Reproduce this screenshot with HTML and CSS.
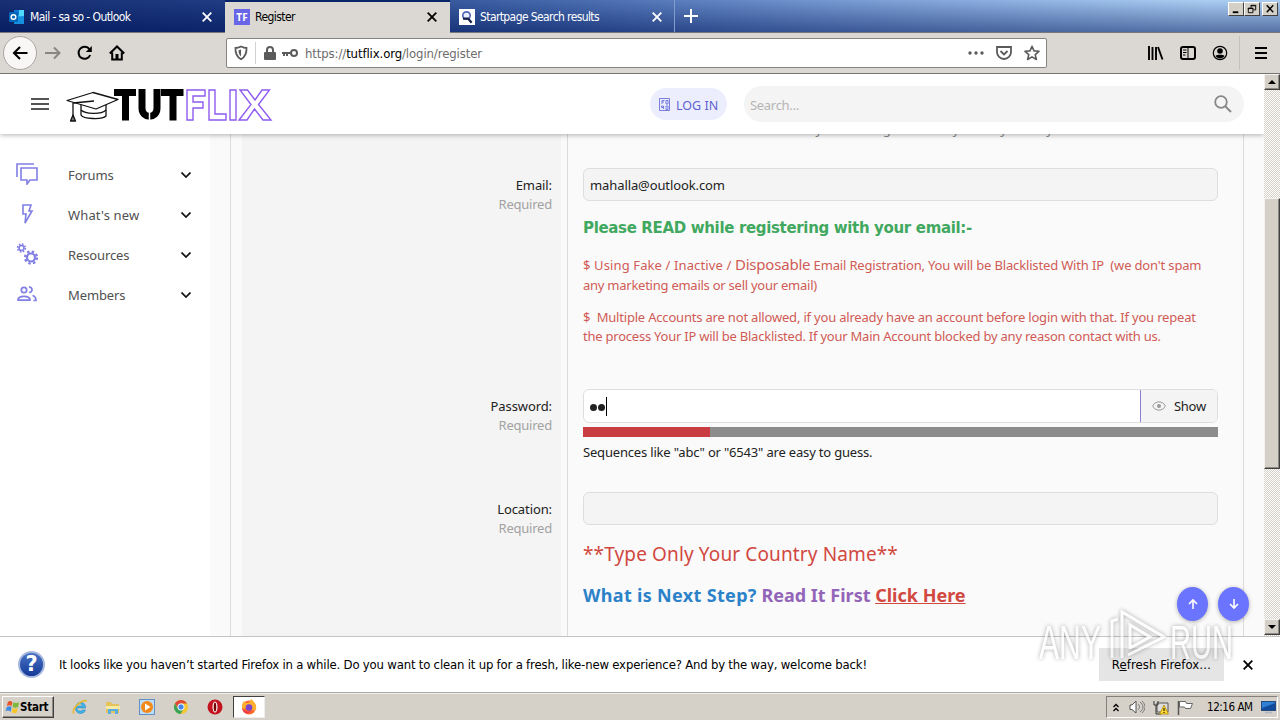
FILE: index.html
```html
<!DOCTYPE html>
<html lang="en">
<head>
<meta charset="utf-8">
<title>Register</title>
<link rel="stylesheet" href="styles.css">
</head>
<body>
<div class="screen">
  <div class="tabbar">
    <div class="tab tab-first">
      <svg class="fav" viewBox="0 0 16 16"><path d="M5 1h10v12H5z" fill="#28a8ea"/><path d="M10 1h5v6h-5z" fill="#50d9ff"/><path d="M5 1h5v5H5z" fill="#0f78d4"/><path d="M5 9l10-2v8H5z" fill="#1490df"/><rect y="3" width="9" height="10" rx="1" fill="#0364b8"/><circle cx="4.5" cy="8" r="2.3" fill="none" stroke="#fff" stroke-width="1.5"/></svg>
      <span class="tab-title t-mail">Mail - sa so - Outlook</span>
      <svg class="x" viewBox="0 0 10 10"><path d="M.7.7l8.6 8.6M9.3.7L.7 9.3"/></svg>
    </div>
    <div class="tab tab-active">
      <span class="fav fav-tf">TF</span>
      <span class="tab-title t-reg">Register</span>
      <svg class="x" viewBox="0 0 10 10"><path d="M.7.7l8.6 8.6M9.3.7L.7 9.3"/></svg>
    </div>
    <div class="tab tab-last">
      <svg class="fav" viewBox="0 0 16 16"><rect width="16" height="16" fill="#fff"/><circle cx="7.5" cy="6.5" r="3.7" fill="#e8edff" stroke="#5365b8" stroke-width="1.7"/><path d="M4 9.6h5.2l3.4 4.2" fill="none" stroke="#17204c" stroke-width="2.3"/></svg>
      <span class="tab-title t-start">Startpage Search results</span>
      <svg class="x" viewBox="0 0 10 10"><path d="M.7.7l8.6 8.6M9.3.7L.7 9.3"/></svg>
    </div>
    <svg class="plus" viewBox="0 0 14 14"><path d="M7 0v14M0 7h14"/></svg>
    <div class="winbtns">
      <svg viewBox="0 0 15 13"><path d="M4 10h6" stroke="#000" stroke-width="2"/></svg>
      <svg viewBox="0 0 15 13"><path d="M6.5 5V2.5h5v5H9M6 3h6M3.500 5.500h5v5h-5zM3 6h6" fill="none" stroke="#000"/></svg>
      <svg class="wclose" viewBox="0 0 15 13"><path d="M4 2.500l7 7.500M11 2.500l-7 7.500" stroke="#000" stroke-width="1.6"/></svg>
    </div>
  </div>

  <div class="navbar">
    <div class="back"><svg viewBox="0 0 16 16"><path d="M15 8H1.500M7.500 2L1.500 8l6 6"/></svg></div>
    <svg class="ni n-fwd" viewBox="0 0 16 16"><path d="M0 8h14M9 2.500L14.500 8 9 13.500"/></svg>
    <svg class="ni n-reload" viewBox="0 0 16 16"><path d="M13.200 10A6 6 0 1 1 12.500 4.300"/><path d="M14.800 1v6h-6z" fill="#000" stroke="none"/></svg>
    <svg class="ni n-home" viewBox="0 0 16 16"><path d="M.8 8.500L8 1.500l7.200 7M3.200 7.500v7h9.600v-7"/><path d="M6.500 9h3v5.500h-3z" fill="#000" stroke="none"/></svg>
    <div class="urlbar">
      <svg class="u-shield" viewBox="0 0 14 16"><path d="M7 1.500C9 2.500 11 3 12.500 3c.3 5-1.500 9-5.500 11.300C3 12 1.200 8 1.500 3 3 3 5 2.500 7 1.500z" fill="none" stroke="#5b5b5b" stroke-width="1.800"/><path d="M7 4.500v7C5.200 10 4.500 8 4.500 5.300z" fill="#5b5b5b"/></svg>
      <span class="u-sep"></span>
      <svg class="u-lock" viewBox="0 0 12 14"><path d="M3 7V4a3 3 0 0 1 6 0v3" fill="none" stroke="#5b5b5b" stroke-width="2"/><rect y="6" width="12" height="8" rx="1" fill="#5b5b5b"/></svg>
      <svg class="u-key" viewBox="0 0 16 10"><circle cx="12" cy="5" r="3" fill="none" stroke="#5b5b5b" stroke-width="2"/><path d="M0 4h9v2H6v2H4V6H3v2H1V6H0z" fill="#5b5b5b"/></svg>
      <span class="url">https://<b>tutflix.org</b>/login/register</span>
      <svg class="u-dots" viewBox="0 0 16 4"><circle cx="2" cy="2" r="1.700"/><circle cx="8" cy="2" r="1.700"/><circle cx="14" cy="2" r="1.700"/></svg>
      <svg class="u-pocket" viewBox="0 0 16 14"><path d="M1 1h14v5a7 7 0 0 1-14 0z" fill="none" stroke="#5b5b5b" stroke-width="1.800"/><path d="M4.500 5L8 8.500 11.500 5" fill="none" stroke="#5b5b5b" stroke-width="1.800"/></svg>
      <svg class="u-star" viewBox="0 0 16 16"><path d="M8 1.300l2 4.600 5 .4-3.800 3.300 1.200 4.900L8 11.900l-4.400 2.600 1.200-4.900L1 6.300l5-.4z" fill="none" stroke="#5b5b5b" stroke-width="1.600" stroke-linejoin="round"/></svg>
    </div>
    <svg class="r-lib" viewBox="0 0 16 14"><path d="M1 0v14M4.500 1v13M8 1v13M10 1l4.500 12.500" stroke="#000" stroke-width="1.900"/></svg>
    <svg class="r-side" viewBox="0 0 16 14"><rect x="1" y="1" width="14" height="12" rx="2" fill="none" stroke="#000" stroke-width="2"/><path d="M8 1v12M3 4h3.500M3 6.500h3.500M3 9h2.500" stroke="#000"/></svg>
    <svg class="r-acc" viewBox="0 0 16 16"><circle cx="8" cy="8" r="6.700" fill="none" stroke="#000" stroke-width="1.200"/><circle cx="8" cy="6" r="2.800"/><path d="M3.500 11c.5-1.700 8.500-1.700 9 0-2 3.200-7 3.200-9 0z"/></svg>
    <span class="r-sep"></span>
    <svg class="r-menu" viewBox="0 0 12 12"><path d="M0 1h12M0 6h12M0 11h12" stroke="#000" stroke-width="2"/></svg>
  </div>

  <div class="viewport">
    <div class="page">
      <header class="site-head">
        <svg class="burger" viewBox="0 0 18 12"><path d="M0 1h18M0 6h18M0 11h18" stroke="#555" stroke-width="1.800"/></svg>
        <svg class="logo" viewBox="0 0 210 40">
          <g fill="#fff" stroke="#111" stroke-width="1.300" stroke-linejoin="round"><path d="M16 19v11c2 4 21 5 25 1V19"/><path d="M16 25c4 4 20 5 25 0" fill="none"/><path d="M2 15.500L28 7.500 53 14.500 31 24z"/><path d="M29 16L8 18v13" fill="none"/><path d="M8 30l-2.500 6h5z" fill="#777"/></g>
          <g stroke="#000" stroke-width="7" fill="none"><path d="M49 7.500h22M60.500 4.500v31M96 7.500h22.500M108 4.500v31"/><path d="M77 4v19c0 11 15 11 15 0V4"/></g><path d="M84.500 26v10" stroke="#fff" stroke-width="1.500"/>
          <path d="M122 5h18v6h-12v6h10v6h-10v12h-6zM144 5h6v24h11v6h-17zM165 5h6v30h-6zM175 5h7.500l7.500 10 7-10h7.500l-11 14.500L206 35h-8l-8.500-11-7.500 11h-8l12-15.500z" fill="#fff" stroke="#8f5bf0" stroke-width="1.400"/>
        </svg>
        <a class="login"><svg viewBox="0 0 11 13"><path d="M.5.500h10v12H.5zM3 6V2.500h2.500M3 4h2M7 2.500h2V6H7zM2.500 8h2v3M2.500 8v1.500h2M7 8h2v3.500H7z" fill="none" stroke="#6c70dc" stroke-width=".9"/></svg><span>LOG IN</span></a>
        <div class="search"><span>Search...</span><svg viewBox="0 0 18 18"><circle cx="7" cy="7" r="5.800" fill="none" stroke="#888" stroke-width="1.800"/><path d="M11 11l6 6" stroke="#888" stroke-width="2"/></svg></div>
      </header>
      <div class="body">
        <nav class="side">
          <a><svg class="si" viewBox="0 0 22 22"><path d="M1 14V1h17M5 5h16v12h-7l-3 4v-4H5z"/></svg><span class="s1">Forums</span><svg class="chev" viewBox="0 0 10 6"><path d="M.5.500L5 5 9.500.500"/></svg></a>
          <a><svg class="si" viewBox="0 0 22 22"><path d="M7 2h8l-2 6h3L9 20l1-9H7z"/></svg><span class="s2">What's new</span><svg class="chev" viewBox="0 0 10 6"><path d="M.5.500L5 5 9.500.500"/></svg></a>
          <a><svg class="si" viewBox="0 0 22 22"><circle cx="5.500" cy="5" r="2.500"/><circle cx="5.500" cy="5" r="3.900" stroke-dasharray="1.600 1.460"/><circle cx="15" cy="14.500" r="4" stroke-width="2.200"/><circle cx="15" cy="14.500" r="6" stroke-width="2.200" stroke-dasharray="2.500 2.210"/></svg><span class="s3">Resources</span><svg class="chev" viewBox="0 0 10 6"><path d="M.5.500L5 5 9.500.500"/></svg></a>
          <a><svg class="si" viewBox="0 0 22 22"><circle cx="8" cy="7" r="2.700" stroke-width="1.700"/><path d="M2 17.200c0-5 12-5 12 0zM13 4.200c4-.5 4 5.500 0 5.300M16.500 12.500c2.500.8 3.500 2.500 3.500 5h-2.500" stroke-width="1.700"/></svg><span class="s4">Members</span><svg class="chev" viewBox="0 0 10 6"><path d="M.5.500L5 5 9.500.500"/></svg></a>
        </nav>
        <main class="form">
          <dl class="row r-name"><dt></dt><dd><p class="hint">This is the name that will be shown with your messages. You may use any name you wish.</p></dd></dl>
          <dl class="row r-email">
            <dt><span class="l1">Email:</span><small>Required</small></dt>
            <dd>
              <div class="input"><span class="mail">mahalla@outlook.com</span></div>
              <p class="read">Please READ while registering with your email:-</p>
              <p class="warn w1"><span class="a0">$ Using Fake / Inactive / </span><big>Disposable</big><span class="a1"> Email Registration, You will be Blacklisted With IP&nbsp; (we don't spam</span><br><span class="a2">any marketing emails or sell your email)</span></p>
              <p class="warn w2"><span class="a3">$&nbsp; Multiple Accounts are not allowed, if you already have an account before login with that. If you repeat</span><br><span class="a4">the process Your IP will be Blacklisted. If your Main Account blocked by any reason contact with us.</span></p>
            </dd>
          </dl>
          <dl class="row r-pass">
            <dt><span class="l2">Password:</span><small>Required</small></dt>
            <dd>
              <div class="input pass"><div class="dots"><i></i><i></i><b></b></div><div class="show"><svg viewBox="0 0 14 10"><path d="M.7 5C3-.500 11-.500 13.300 5 11 10.500 3 10.500.7 5z" fill="none" stroke="#999"/><circle cx="7" cy="5" r="2" fill="#999"/></svg><span>Show</span></div></div>
              <div class="meter"><i></i></div>
              <p class="seq">Sequences like "abc" or "6543" are easy to guess.</p>
            </dd>
          </dl>
          <dl class="row r-loc">
            <dt><span class="l3">Location:</span><small>Required</small></dt>
            <dd>
              <div class="input"></div>
              <p class="country">**Type Only Your Country Name**</p>
              <p class="next"><span>What is Next Step?</span> <em>Read It First</em> <a>Click Here</a></p>
            </dd>
          </dl>
        </main>
      </div>
      <div class="jump">
        <span><svg viewBox="0 0 12 12"><path d="M6 11V2M2 6l4-4 4 4"/></svg></span>
        <span><svg viewBox="0 0 12 12"><path d="M6 1v9M2 6l4 4 4-4"/></svg></span>
      </div>
    </div>
    <div class="scroll">
      <div class="sbtn"><svg viewBox="0 0 8 4"><path d="M0 4l4-4 4 4z"/></svg></div>
      <div class="thumb"></div>
      <div class="sbtn sdown"><svg viewBox="0 0 8 4"><path d="M0 0l4 4 4-4z"/></svg></div>
    </div>
  </div>

  <div class="notice">
    <span class="q">?</span>
    <span class="msg">It looks like you haven’t started Firefox in a while. Do you want to clean it up for a fresh, like-new experience? And by the way, welcome back!</span>
    <button class="refresh"><span>R<u>e</u>fresh Firefox…</span></button>
    <svg class="nx" viewBox="0 0 10 10"><path d="M.7.7l8.600 8.600M9.300.7L.7 9.300"/></svg>
  </div>

  <div class="taskbar">
    <div class="start"><svg viewBox="0 0 16 16"><path d="M3 3c2-2 3-1.500 5 0L7 7C5 6 4 6 2 7z" fill="#e8542a"/><path d="M9 3c2 1 4 1 6 0l-1 5c-2 1-4 1-6 0z" fill="#7cb83a"/><path d="M2 8c2-1 3-1 5 0l-1 5c-2-1.500-3.500-1.500-5.500-.5z" fill="#3c8be0"/><path d="M8 9c2 1 3.500 1 5.500 0l-1 5c-2 1-4 .5-5.500-.5z" fill="#f6c62c"/></svg><span>Start</span></div>
    <svg class="ti t1" viewBox="0 0 16 16"><path d="M4.200 9h9.300c.5-7-9-8-10-.5-.5 7 8 8 10 2.500h-3c-2 2-5.500 1-5.800-2zM5 7c.8-3 5-3 5.500 0z" fill="#42b4e8" stroke="#2789c4" stroke-width=".6"/><path d="M2 14.500C-1 11 9 0 15 2" fill="none" stroke="#e9bb35" stroke-width="1.700"/></svg>
    <svg class="ti t2" viewBox="0 0 16 16"><path d="M1 3h5l1 2h7v9H1z" fill="#e3c35c"/><path d="M1 7h14v3H1z" fill="#f8eaa5"/><path d="M3 15v-5h10v5h-3v-3H6v3z" fill="#58aee0"/></svg>
    <svg class="ti t3" viewBox="0 0 16 16"><rect x=".5" y=".5" width="15" height="15" fill="#bfdcf4" stroke="#5d91c8"/><circle cx="8" cy="8" r="6" fill="#f18a1b"/><path d="M6 4.500v7L11.500 8z" fill="#fff"/></svg>
    <svg class="ti t4" viewBox="0 0 16 16"><circle cx="8" cy="8" r="7" fill="#f5c72c"/><path d="M1.900 4.500A7 7 0 0 1 14 4.500H8L5 9.500z" fill="#df4835"/><path d="M1.900 4.500A7 7 0 0 0 7.500 15l3-5L5 9.700z" fill="#39a457"/><circle cx="8" cy="8" r="3.200" fill="#4687ec" stroke="#fff"/></svg>
    <svg class="ti t5" viewBox="0 0 16 16"><circle cx="8" cy="8" r="7.500" fill="#c41420"/><ellipse cx="8" cy="8" rx="2.500" ry="5.500" fill="#fff"/><ellipse cx="8" cy="8" rx="1.300" ry="4.500" fill="#700"/></svg>
    <div class="active-app"><svg class="ti" viewBox="0 0 16 16"><circle cx="8" cy="8.500" r="7" fill="#ff6b2c"/><path d="M1 8c0-3 1-5 2-6 1 2 3 2 4 2 3-1 2-3 3-4 4 3 6 7 5 10-3 4-5-2-7-2S1 12 1 8z" fill="#ffb02e"/><circle cx="8" cy="8.500" r="3.300" fill="#7a45cc"/><path d="M1 9c2 3 5 4 9 3-2 4-8 3-9-3z" fill="#f5354c"/></svg></div>
    <div class="tray">
      <svg class="y1" viewBox="0 0 6 9"><path d="M.5 4L3 1.500 5.500 4M.5 8L3 5.500 5.500 8" fill="none" stroke="#000" stroke-width="1.300"/></svg>
      <svg class="y2" viewBox="0 0 16 14"><path d="M1 5h2l4-4v12L3 9.500H1z" fill="#fff" stroke="#555"/><path d="M9 4c2 2 2 4 0 6M11 2c4 3 4 7 0 10M13 1c4 4 4 8 0 12" fill="none" stroke="#777"/></svg>
      <svg class="y3" viewBox="0 0 16 15"><path d="M4 3h11v9H4z" fill="#ddd" stroke="#555"/><path d="M1 1v4h4V1M3 5v9h5" fill="none" stroke="#333"/><path d="M11 5l4.500 9h-9z" fill="#ffd733" stroke="#a58100" stroke-width=".7"/><path d="M11 8v3M11 12v1" stroke="#000"/></svg>
      <svg class="y4" viewBox="0 0 16 15"><path d="M1.500 1v14" stroke="#555" stroke-width="1.500"/><path d="M2.500 1.500h6l1 2h6l-2 5h-5l-1-1.500h-5z" fill="#fff" stroke="#666"/></svg>
      <span class="clock">12:16 AM</span>
      <svg class="y5" viewBox="0 0 15 14"><rect x=".5" y="1.500" width="14" height="9" fill="#2f7fd4" stroke="#244a80"/><path d="M1 8l13-5v7H1z" fill="#124b9c"/><path d="M4 12.500h7" stroke="#aeb9c6" stroke-width="1.500"/></svg>
    </div>
  </div>

  <svg class="mark" viewBox="0 0 200 60">
    <g class="mark-text"><text x="5" y="52" textLength="62" lengthAdjust="spacingAndGlyphs">ANY</text><text x="136" y="52" textLength="63" lengthAdjust="spacingAndGlyphs">RUN</text></g>
    <path d="M78 51V14l6-2M88 51V5l42 25-36 18M96 42V18l20 12-20 11" fill="none" stroke="#fff" stroke-width="3"/>
  </svg>
</div>
</body>
</html>
```
FILE: styles.css
```css
* { box-sizing: border-box; }
body { margin: 0; background: #fff; }
p, dl, dd { margin: 0; }
svg { display: block; flex: none; }
.screen { position: relative; width: 1280px; height: 720px; overflow: hidden; display: flex; flex-direction: column; font-family: "DejaVu Sans Condensed", "DejaVu Sans", sans-serif; font-stretch: condensed; font-size: 12px; color: #000; }
.screen span { white-space: nowrap; }

/* tab strip */
.tabbar { height: 33px; flex: none; display: flex; border-bottom: 1px solid #77777d; background: linear-gradient(180deg, rgba(255,255,255,.06), rgba(5,25,90,.5)), linear-gradient(90deg, #0a246a 0, #12307c 230px, #3b60a8 560px, #6f94d0 840px, #a6cbf2 1210px, #a6caf0 100%); }
.tab { display: flex; align-items: center; height: 32px; width: 225px; padding: 2px 13px 0 9px; color: #fff; }
.tab-active { background: #dbd8d3; color: #000; height: 33px; border-top: 2px solid #0a246a; padding-top: 0; padding-bottom: 2px; }
.tab-last { border-right: 1px solid #839bce; padding-right: 12px; }
.fav { width: 16px; height: 16px; margin-right: 5px; }
.fav-tf { background: #6866e6; color: #fff; font: bold 10px/16px "Noto Sans", sans-serif; text-align: center; }
.tab-title { flex: 1; }
.t-mail { letter-spacing: -.59px; }
.t-reg { letter-spacing: -.55px; }
.t-start { letter-spacing: -.6px; }
.x, .nx { width: 10px; height: 10px; fill: none; stroke: currentColor; stroke-width: 1.8; }
.plus { width: 14px; height: 14px; margin: 9px 0 0 9px; stroke: #fff; stroke-width: 2; }
.winbtns { display: flex; margin: 2px 2px 0 auto; }
.winbtns svg { width: 16px; height: 14px; background: #d4d0c8; border: 1px solid; border-color: #fff #404040 #404040 #fff; }
.winbtns .wclose { margin-left: 2px; }

/* toolbar */
.navbar { height: 41px; flex: none; display: flex; align-items: center; background: #dbd8d3; border-bottom: 1px solid #77756f; }
.back { width: 34px; height: 34px; margin-left: 3px; border: 1px solid #aaa7a2; border-radius: 50%; background: #f8f7f6; display: flex; align-items: center; justify-content: center; }
.back svg { width: 17px; height: 16px; fill: none; stroke: #000; stroke-width: 2.1; }
.ni { width: 16px; height: 16px; fill: none; stroke: #000; stroke-width: 2; }
.n-fwd { margin-left: 8px; stroke: #888681; }
.n-reload { margin-left: 16px; }
.n-home { margin-left: 16px; }
.urlbar { width: 821px; height: 30px; margin-left: 101px; border: 1px solid #86847f; border-radius: 2px; background: #fff; display: flex; align-items: center; }
.u-shield { width: 14px; height: 16px; margin-left: 7px; }
.u-sep { width: 1px; height: 22px; margin-left: 7px; background: #d2d2d2; }
.u-lock { width: 12px; height: 14px; margin-left: 8px; }
.u-key { width: 16px; height: 10px; margin-left: 6px; }
.url { margin-left: 7px; flex: 1; font-size: 13px; letter-spacing: -.1px; color: #6c6c6c; }
.url b { font-weight: normal; color: #000; }
.u-dots { width: 16px; height: 4px; fill: #5b5b5b; }
.u-pocket { width: 16px; height: 14px; margin-left: 12px; }
.u-star { width: 16px; height: 16px; margin: 0 6px 0 12px; }
.r-lib { width: 16px; height: 14px; margin-left: 101px; }
.r-side { width: 16px; height: 14px; margin-left: 16px; }
.r-acc { width: 16px; height: 16px; margin-left: 16px; }
.r-sep { width: 1px; height: 34px; margin-left: 11px; background: #c5c2bc; }
.r-menu { width: 12px; height: 12px; margin-left: 15px; }

/* web page */
.viewport { height: 562px; flex: none; display: flex; font-family: "Noto Sans", "Open Sans", sans-serif; font-stretch: normal; font-size: 13px; }
.page { position: relative; width: 1264px; display: flex; flex-direction: column; overflow: hidden; background: #fafafa; }
.site-head { position: relative; z-index: 2; height: 60px; flex: none; display: flex; align-items: center; background: #fff; box-shadow: 0 1px 5px rgba(0,0,0,.3); }
.burger { width: 18px; height: 12px; margin-left: 31px; }
.logo { width: 210px; height: 40px; margin: 2px 0 0 16px; }
.login { display: flex; align-items: center; width: 77px; height: 32px; margin: 0 0 0 375px; padding-left: 9px; gap: 6px; border-radius: 16px; background: #eceefe; color: #6163ce; font-size: 12.500px; }
.login svg { width: 11px; height: 13px; }
.login span { letter-spacing: 0; padding-top: 2px; }
.search { display: flex; align-items: center; justify-content: space-between; width: 500px; height: 36px; margin-left: 17px; padding: 0 12px 0 6px; border-radius: 18px; background: #f4f4f4; color: #b5b5b5; }
.search span { letter-spacing: -.3px; padding-top: 2px; }
.search svg { width: 18px; height: 18px; }
.body { height: 502px; flex: none; display: flex; }
.side { width: 210px; flex: none; padding-top: 21px; background: #fff; }
.side a { display: flex; align-items: center; height: 40px; padding: 0 19px 0 16px; color: #505050; }
.side span { flex: 1; margin: -1px 0 0 30px; }
.s1, .s3, .s4 { letter-spacing: -.12px; }
.s2 { letter-spacing: .15px; }
.si { width: 22px; height: 22px; margin-top: -2px; fill: none; stroke: #817fe3; stroke-width: 1.600; }
.chev { width: 10px; height: 6px; margin-top: -1px; fill: none; stroke: #111; stroke-width: 1.700; }
.form { width: 1014px; margin-left: 20px; border: solid #dcdcdc; border-width: 0 1px; overflow: hidden; }
.row { display: flex; }
dt { width: 337px; flex: none; padding: 8px 15px 0 0; text-align: right; color: #222; background: linear-gradient(90deg, #fafafa 11px, #f4f4f4 11px, #f4f4f4 330px, #fafafa 330px); border-right: 1px solid #dcdcdc; }
dt span, dt small { display: block; }
dt span { line-height: 19px; letter-spacing: -.1px; }
dt small { font-size: 13px; line-height: 19px; color: #a2a2a2; letter-spacing: -.22px; }
dd { width: 635px; margin-left: 15px; }
.r-name { height: 34px; }
.r-name dd { display: flex; }
.hint { margin-top: -15px; height: 20px; line-height: 20px; color: #888; white-space: nowrap; letter-spacing: -.34px; }
.r-email { height: 221px; }
.r-pass { height: 103px; }
.r-loc { height: 146px; }
.input { height: 33px; border: 1px solid #dedede; border-radius: 6px; background: #f4f4f4; padding: 0 6px; display: flex; align-items: center; color: #222; }
.mail { letter-spacing: -.1px; }
.read { margin-top: 16px; height: 22px; font: bold 15px/22px "DejaVu Sans", sans-serif; color: #41a85f; white-space: nowrap; letter-spacing: -.34px; }
.warn { color: #d05a55; white-space: nowrap; }
.warn big { font-size: 15px; letter-spacing: -.2px; }
.a0 { letter-spacing: .12px; white-space: pre !important; }
.a1 { letter-spacing: -.16px; }
.a2 { letter-spacing: -.25px; }
.a3 { letter-spacing: -.19px; }
.a4 { letter-spacing: -.23px; }
.w1 { margin-top: 15px; line-height: 20px; }
.w2 { margin-top: 13px; line-height: 19px; }
.pass { height: 34px; padding: 0 0 0 6px; background: #fff; }
.dots { flex: 1; display: flex; align-items: center; gap: 1px; }
.dots i { width: 7px; height: 7px; border-radius: 50%; background: #222; margin-top: 2px; }
.dots b { width: 1px; height: 19px; background: #000; }
.show { width: 77px; height: 32px; display: flex; align-items: center; gap: 8px; padding-left: 11px; border-left: 1px solid #8a80d8; border-radius: 0 5px 5px 0; background: #f4f4f4; }
.show svg { width: 14px; height: 10px; }
.meter { height: 10px; margin-top: 4px; background: #8c8c8c; }
.meter i { display: block; width: 127px; height: 10px; background: #c93c42; }
.show span { letter-spacing: -.3px; }
.seq { margin-top: 5px; line-height: 20px; white-space: nowrap; color: #222; letter-spacing: -.18px; }
.country { margin-top: 16px; font-size: 19px; line-height: 26px; color: #d14841; white-space: nowrap; letter-spacing: .13px; }
.next { margin-top: 15px; font-size: 18px; font-weight: bold; line-height: 26px; white-space: nowrap; color: #2c82c9; }
.next span { letter-spacing: .33px; }
.next em { font-style: normal; color: #9365b8; }
.next a { color: #d14841; text-decoration: underline; }
.jump { position: absolute; right: 15px; bottom: 15px; display: flex; gap: 10px; }
.jump span { width: 31px; height: 34px; border-radius: 50%; background: #6b74ff; box-shadow: 0 1px 4px rgba(0,0,0,.3); display: flex; align-items: center; justify-content: center; }
.jump svg { width: 12px; height: 12px; fill: none; stroke: #fff; stroke-width: 1.600; }

/* scrollbar */
.scroll { width: 16px; display: flex; flex-direction: column; background: repeating-conic-gradient(#d4d0c8 0 25%, #fff 0 50%) 0 0 / 2px 2px; }
.sbtn, .thumb { background: #d4d0c8; border: 1px solid; border-color: #f4f2ee #404040 #404040 #f4f2ee; box-shadow: inset -1px -1px #8d8a84; }
.sbtn { height: 16px; display: flex; align-items: center; justify-content: center; }
.sbtn svg { width: 8px; height: 4px; }
.thumb { height: 271px; margin-top: 108px; }
.sdown { margin-top: auto; margin-bottom: 1px; }

/* notification */
.notice { height: 57px; flex: none; display: flex; align-items: center; background: #fff; border-top: 1px solid #c4c4c4; border-bottom: 1px solid #aaa; padding-left: 18px; }
.q { width: 27px; height: 27px; border-radius: 50%; border: 2px solid #a8b8dd; background: linear-gradient(#4772c5, #153a97); color: #fff; font: bold 21px/23px "DejaVu Sans", sans-serif; text-align: center; }
.msg { width: 1040px; margin-left: 14px; font-size: 13px; letter-spacing: -.14px; word-spacing: -.2px; }
.refresh { width: 125px; height: 33px; padding: 0; border: 0; background: #e5e5e5; font: inherit; font-size: 13px; letter-spacing: .08px; color: #000; }
.nx { margin-left: 19px; }

/* taskbar */
.taskbar { height: 27px; flex: none; display: flex; align-items: center; background: #d5d0c8; border-top: 1px solid #f0eeea; }
.start { width: 52px; height: 22px; margin-left: 2px; padding-left: 2px; display: flex; align-items: center; border: 1px solid; border-color: #fff #404040 #404040 #fff; box-shadow: inset -1px -1px #8d8a84; font-weight: bold; font-size: 11.500px; letter-spacing: -.25px; }
.start svg { width: 15px; height: 16px; }
.ti { width: 16px; height: 16px; }
.t1 { margin-left: 18px; }
.t2 { margin-left: 17px; }
.t3 { margin-left: 18px; }
.t4 { margin-left: 18px; }
.t5 { margin-left: 18px; }
.active-app { width: 32px; height: 22px; margin-left: 10px; display: flex; align-items: center; justify-content: center; background: #fff; border: 1px solid; border-color: #404040 #eee #eee #404040; }
.tray { width: 172px; height: 22px; margin-left: auto; margin-right: 2px; padding-left: 6px; display: flex; align-items: center; border: 1px solid; border-color: #85817a #fff #fff #85817a; }
.y1 { width: 6px; height: 9px; }
.y2 { width: 16px; height: 14px; margin-left: 10px; }
.y3 { width: 16px; height: 15px; margin-left: 8px; }
.y4 { width: 16px; height: 15px; margin-left: 8px; }
.clock { width: 48px; margin-left: 14px; font-size: 11.500px; letter-spacing: -.45px; }
.y5 { width: 15px; height: 14px; margin-left: 6px; }

/* watermark */
.mark { position: absolute; left: 1034px; top: 607px; width: 200px; height: 60px; opacity: .68; filter: drop-shadow(0 0 2px rgba(0,0,0,.5)); }
.mark-text { fill: #fff; font: 49px "Liberation Sans", sans-serif; }
```
